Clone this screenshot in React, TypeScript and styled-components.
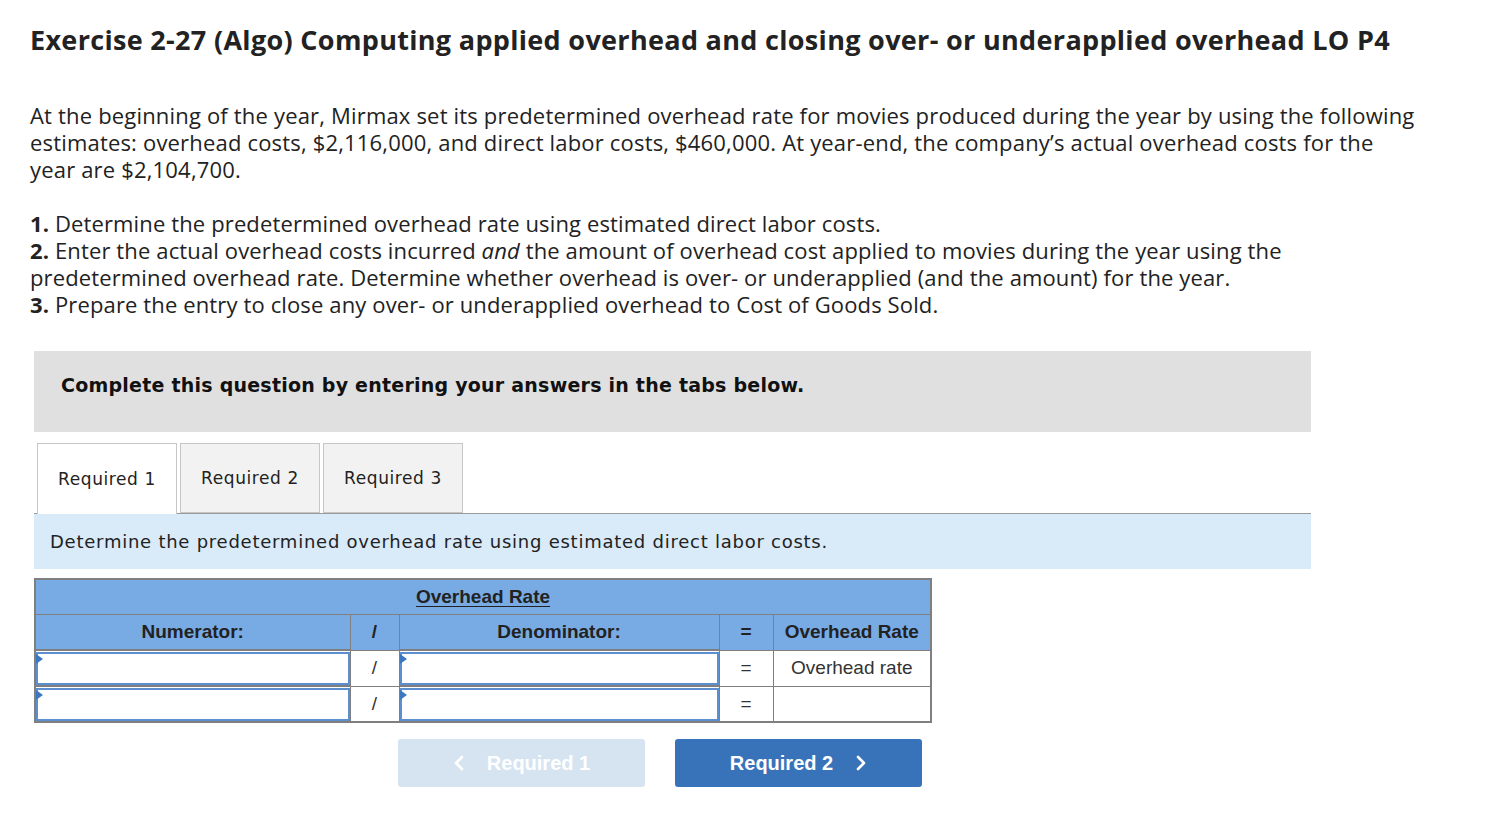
import styled, { createGlobalStyle } from 'styled-components';

const GlobalStyle = createGlobalStyle`
	body {
		margin: 0;
		background: #ffffff;
		color: #222222;
		font-family: 'Open Sans', sans-serif;
	}
`;

const Page = styled.div`
	padding: 21px 0 30px 30px;
	width: 1440px;
`;

const Title = styled.h1`
	margin: 0;
	font-family: 'Open Sans', sans-serif;
	font-size: 27px;
	line-height: 38px;
	font-weight: 700;
	letter-spacing: 0.32px;
	color: #222222;
`;

const Para = styled.p`
	margin: 43px 0 0;
	font-size: 22px;
	line-height: 27px;
	letter-spacing: 0.18px;
	color: #222222;
	white-space: nowrap;
`;

const Steps = styled.div`
	margin-top: 27px;
	font-size: 22px;
	line-height: 27px;
	letter-spacing: 0.13px;
	color: #222222;
	white-space: nowrap;
`;

const Step = styled.div`
	b {
		font-weight: 700;
	}
	i {
		font-style: italic;
	}
`;

const Frame = styled.div`
	margin: 33px 0 0 4px;
	width: 1277px;
`;

const Banner = styled.div`
	height: 81px;
	background: #e0e0e0;
	display: flex;
	align-items: center;
	padding: 0 27px 14px;
	box-sizing: border-box;
	font-family: 'DejaVu Sans', Verdana, sans-serif;
	font-weight: 700;
	font-size: 19px;
	letter-spacing: 0.23px;
	color: #111111;
`;

const TabRow = styled.div`
	display: flex;
	gap: 3px;
	margin-top: 11px;
	padding-left: 3px;
	border-bottom: 1px solid #9a9a9a;
	height: 70px;
`;

const Tab = styled.div<{ $active?: boolean }>`
	width: 140px;
	height: ${(p) => (p.$active ? '71px' : '70px')};
	box-sizing: border-box;
	border: 1px solid #c6c6c6;
	border-bottom: ${(p) => (p.$active ? 'none' : '1px solid #c6c6c6')};
	background: ${(p) => (p.$active ? '#ffffff' : '#f2f2f2')};
	display: flex;
	align-items: center;
	justify-content: center;
	font-family: 'DejaVu Sans', Verdana, sans-serif;
	font-size: 17px;
	letter-spacing: 0.6px;
	color: #222222;
	position: relative;
	z-index: 1;
`;

const Instruction = styled.div`
	height: 55px;
	background: #d9eaf9;
	display: flex;
	align-items: center;
	padding-left: 16px;
	font-family: 'DejaVu Sans', Verdana, sans-serif;
	font-size: 18px;
	letter-spacing: 0.75px;
	color: #222222;
`;

const Grid = styled.table`
	margin-top: 9px;
	border-collapse: collapse;
	width: 896px;
	font-family: 'Liberation Sans', Arial, sans-serif;
	table-layout: fixed;
	border: 2px solid #7f7f7f;
`;

const HeadCell = styled.th`
	background: #78abe3;
	height: 34px;
	padding: 0;
	border: 1px solid #7f7f7f;
	font-size: 19px;
	font-weight: 700;
	color: #222222;
	text-align: center;
`;

const Caption = styled.span`
	text-decoration: underline;
	text-underline-offset: 3px;
`;

const Cell = styled.td`
	height: 34px;
	padding: 0;
	border: 1px solid #7f7f7f;
	font-size: 19px;
	color: #333333;
	text-align: center;
	background: #ffffff;
`;

const InputCell = styled.td`
	height: 34px;
	padding: 0;
	border: 1px solid #7f7f7f;
	border-top-width: 2px;
	background: #ffffff;
`;

const Field = styled.div`
	position: relative;
	height: 33px;
	box-sizing: border-box;
	border: 2px solid #5b8fd0;
	background: #ffffff;
	&::before {
		content: '';
		position: absolute;
		left: -2px;
		top: 0;
		border-top: 5px solid transparent;
		border-bottom: 5px solid transparent;
		border-left: 7px solid #3b78c1;
	}
`;

const Nav = styled.div`
	display: flex;
	gap: 30px;
	margin: 16px 0 0 364px;
`;

const NavButton = styled.div<{ $disabled?: boolean }>`
	width: 247px;
	height: 48px;
	border-radius: 3px;
	background: ${(p) => (p.$disabled ? '#d6e3f1' : '#3873b9')};
	color: #ffffff;
	display: flex;
	align-items: center;
	justify-content: center;
	gap: 22px;
	font-family: 'Liberation Sans', Arial, sans-serif;
	font-weight: 700;
	font-size: 20px;
`;

const Chevron = ({ dir }: { dir: 'left' | 'right' }) => (
	<svg width="12" height="18" viewBox="0 0 12 18" fill="none">
		<path
			d={dir === 'left' ? 'M9 3 L3 9 L9 15' : 'M3 3 L9 9 L3 15'}
			stroke="#ffffff"
			strokeWidth="2.6"
			strokeLinecap="round"
			strokeLinejoin="round"
		/>
	</svg>
);

const columns = [315, 49, 320, 54, 158];

const rows = [{ result: 'Overhead rate' }, { result: '' }];

const App = () => {
	return (
		<>
			<GlobalStyle />
			<Page>
				<Title>Exercise 2-27 (Algo) Computing applied overhead and closing over- or underapplied overhead LO P4</Title>
				<Para>
					At the beginning of the year, Mirmax set its predetermined overhead rate for movies produced during the year by using the following
					<br />
					estimates: overhead costs, $2,116,000, and direct labor costs, $460,000. At year-end, the company’s actual overhead costs for the
					<br />
					year are $2,104,700.
				</Para>
				<Steps>
					<Step>
						<b>1.</b> Determine the predetermined overhead rate using estimated direct labor costs.
					</Step>
					<Step>
						<b>2.</b> Enter the actual overhead costs incurred <i>and</i> the amount of overhead cost applied to movies during the year using the
						<br />
						predetermined overhead rate. Determine whether overhead is over- or underapplied (and the amount) for the year.
					</Step>
					<Step>
						<b>3.</b> Prepare the entry to close any over- or underapplied overhead to Cost of Goods Sold.
					</Step>
				</Steps>

				<Frame>
					<Banner>Complete this question by entering your answers in the tabs below.</Banner>
					<TabRow>
						<Tab $active>Required 1</Tab>
						<Tab>Required 2</Tab>
						<Tab>Required 3</Tab>
					</TabRow>
					<Instruction>Determine the predetermined overhead rate using estimated direct labor costs.</Instruction>

					<Grid>
						<colgroup>
							{columns.map((w, i) => (
								<col key={i} style={{ width: w }} />
							))}
						</colgroup>
						<thead>
							<tr>
								<HeadCell colSpan={5}>
									<Caption>Overhead Rate</Caption>
								</HeadCell>
							</tr>
							<tr>
								<HeadCell>Numerator:</HeadCell>
								<HeadCell>/</HeadCell>
								<HeadCell>Denominator:</HeadCell>
								<HeadCell>=</HeadCell>
								<HeadCell>Overhead Rate</HeadCell>
							</tr>
						</thead>
						<tbody>
							{rows.map((row, index) => (
								<tr key={index}>
									<InputCell>
										<Field />
									</InputCell>
									<Cell>/</Cell>
									<InputCell>
										<Field />
									</InputCell>
									<Cell>=</Cell>
									<Cell>{row.result}</Cell>
								</tr>
							))}
						</tbody>
					</Grid>

					<Nav>
						<NavButton $disabled>
							<Chevron dir="left" />
							Required 1
						</NavButton>
						<NavButton>
							Required 2
							<Chevron dir="right" />
						</NavButton>
					</Nav>
				</Frame>
			</Page>
		</>
	);
};

export default App;
